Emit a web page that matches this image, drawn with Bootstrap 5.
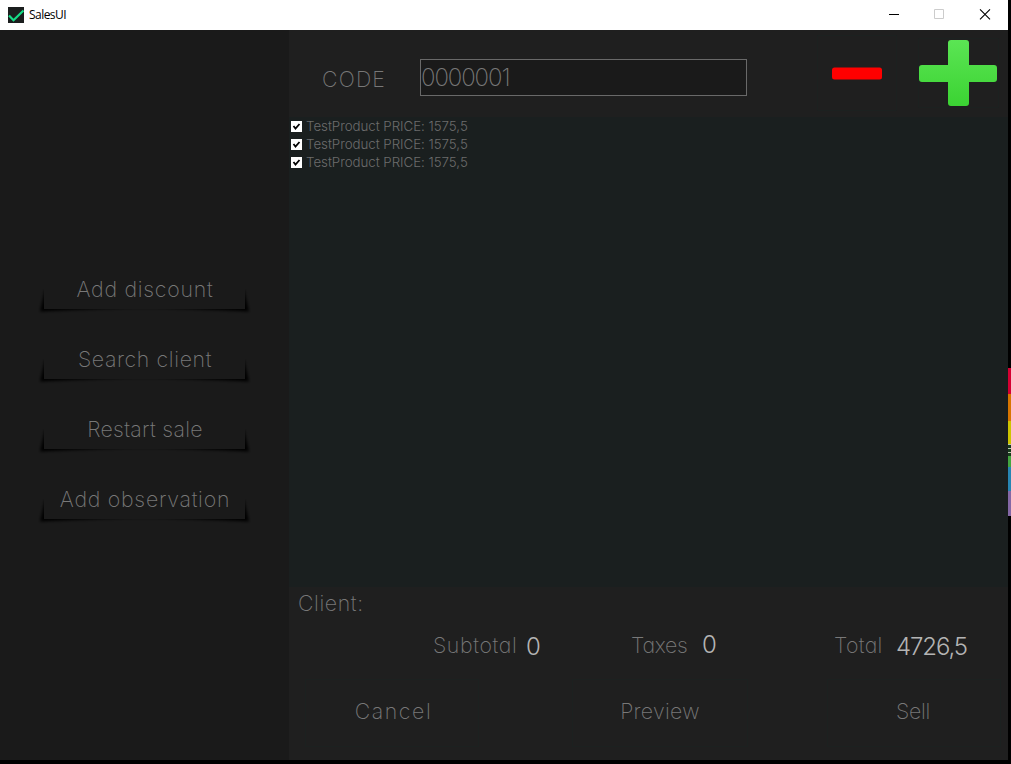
<!DOCTYPE html>
<html lang="en">
<head>
<meta charset="utf-8">
<meta name="viewport" content="width=device-width, initial-scale=1">
<title>SalesUI</title>
<link href="https://cdn.jsdelivr.net/npm/bootstrap@5.3.0/dist/css/bootstrap.min.css" rel="stylesheet">
<style>
body{background:#000;width:1011px;height:764px;overflow:hidden;font-family:Inter,"Open Sans",sans-serif;font-feature-settings:"cv11";font-weight:300;color:#787878}
.win{width:1008px;height:760px}
.titlebar{height:30px;font:12px/30px "Open Sans",sans-serif;color:#000;letter-spacing:-.55px}
.side{width:289px;background:#1a1a1a;padding-top:236px}
.workspace{background:#1f1f1f}
.txt{font-size:21.3px;line-height:30px;white-space:nowrap;font-weight:200}
.curl{width:220px;height:70px;margin-left:35px;position:relative;border:0;background:none;color:inherit;padding:0 0 24px}
.curl svg{position:absolute;left:0;top:0;z-index:0}
.curl span{position:relative;z-index:1;display:block}
.top{height:87px}
.code{width:327px;height:37px;background:#1a1a1a;border:1px solid #696969;border-radius:0;color:#787878;font-size:24px;line-height:35px;padding:0;font-weight:200;letter-spacing:-1.1px;margin:29px 0 0 0;outline:0}
.items{height:470px;background:#1a1f1f;padding:0 0 0 2px;font-size:13.3px;color:#6c6c6c;letter-spacing:-.03px}
.item{height:18px;line-height:18px}
.value{color:#b4b4b4;font-size:24px;font-weight:300}
.act{height:68px;border:1px solid #1c2120;background:none;color:inherit;padding:0 0 5px}
.strip{position:absolute;left:1008px;top:368px;width:3px;height:148px;background:linear-gradient(#d50032 0 26px,#d87500 26px 53px,#cdc400 53px 76px,#183c1c 76px 88px,#43a540 88px 99px,#2785b3 99px 123px,#8467a5 123px)}
.strip i{display:block;height:1px;background:#b8c8b0;margin-bottom:3px}
.ls3{letter-spacing:.3px}.ls6{letter-spacing:.62px}.ls7{letter-spacing:.75px}.ls12{letter-spacing:1.2px}.ls15{letter-spacing:1.6px}.lsn{letter-spacing:-.25px}.lsv{letter-spacing:-1.1px}
</style>
</head>
<body>
<svg width="0" height="0" class="position-absolute">
<defs>
<filter id="soft" x="-10%" y="-50%" width="120%" height="200%"><feGaussianBlur stdDeviation="1.7"/></filter>
<symbol id="curl" viewBox="0 0 220 70">
<path d="M10 24L5 45.500Q60 43 110 41.500Q160 43 214 45.500L209 24Z" fill="#000" filter="url(#soft)"/>
<path d="M9 17H210V43H9Z" fill="#1a1a1a"/><path d="M2 14H217V23H2Z" fill="#1a1a1a"/>
</symbol>
</defs>
</svg>
<div class="win d-flex flex-column">
  <header class="titlebar bg-white d-flex align-items-center flex-shrink-0">
    <svg width="16" height="16" class="ms-2"><path d="M0 0h16v16H0z" fill="#1b1e1e"/><path d="M1 8.500l4.500 4.700L15.500 3.500" fill="none" stroke="#16dd87" stroke-width="2.200"/></svg>
    <span style="margin-left:5px">SalesUI</span>
    <svg width="119" height="30" class="ms-auto"><path d="M0 14.500h10" stroke="#000"/><path d="M45.500 9.500h9v9h-9z" fill="none" stroke="#ccc"/><path d="M91 9.300l10 10m0-10l-10 10" stroke="#000" stroke-width="1.100"/></svg>
  </header>
  <div class="d-flex flex-grow-1">
    <nav class="side flex-shrink-0">
      <button class="curl d-block txt"><svg width="220" height="70"><use href="#curl"/></svg><span class="ls7">Add discount</span></button>
      <button class="curl d-block txt"><svg width="220" height="70"><use href="#curl"/></svg><span class="ls6">Search client</span></button>
      <button class="curl d-block txt"><svg width="220" height="70"><use href="#curl"/></svg><span class="ls3">Restart sale</span></button>
      <button class="curl d-block txt"><svg width="220" height="70"><use href="#curl"/></svg><span class="ls7">Add observation</span></button>
    </nav>
    <main class="workspace flex-grow-1">
      <div class="top d-flex">
        <label class="txt ls12" for="code" style="width:131px;padding:34px 0 0 33px">CODE</label>
        <input id="code" class="code" value="0000001">
        <svg width="260" height="87">
          <defs><linearGradient id="g" x2="0" y2="1"><stop stop-color="#5be554"/><stop offset="1" stop-color="#3bd333"/></linearGradient></defs>
          <path d="M70.500 5.500h79v75h-79zM171.500 8.500h80v69h-80z" fill="none" stroke="#1c2120"/>
          <rect x="85" y="37.500" width="50" height="12" rx="2.500" fill="#f00"/>
          <path d="M205 10h15q3 0 3 3v22h25q3 0 3 3v11q0 3-3 3h-25v21q0 3-3 3h-15q-3 0-3-3V52h-26q-3 0-3-3V38q0-3 3-3h26V13q0-3 3-3z" fill="url(#g)" transform="translate(-1 0)"/>
        </svg>
      </div>
      <div class="items">
        <div class="item d-flex align-items-center"><svg width="11" height="11"><path d="M0 0h11v11H0z" fill="#fff"/><path d="M2.500 5l2 2.500L8.500 3" fill="none" stroke="#000" stroke-width="1.800"/></svg><span class="ms-1">TestProduct PRICE: 1575,5</span></div>
        <div class="item d-flex align-items-center"><svg width="11" height="11"><path d="M0 0h11v11H0z" fill="#fff"/><path d="M2.500 5l2 2.500L8.500 3" fill="none" stroke="#000" stroke-width="1.800"/></svg><span class="ms-1">TestProduct PRICE: 1575,5</span></div>
        <div class="item d-flex align-items-center"><svg width="11" height="11"><path d="M0 0h11v11H0z" fill="#fff"/><path d="M2.500 5l2 2.500L8.500 3" fill="none" stroke="#000" stroke-width="1.800"/></svg><span class="ms-1">TestProduct PRICE: 1575,5</span></div>
      </div>
      <div class="txt ls6" style="padding:1px 0 0 9px;height:43px">Client:</div>
      <div class="d-flex txt" style="height:49px">
        <span class="ls6" style="width:93px;margin-left:144px">Subtotal</span><span class="value" style="width:105px;padding-top:2px">0</span>
        <span class="lsn" style="width:71px">Taxes</span><span class="value" style="width:132px">0</span>
        <span class="ls3" style="width:62px">Total</span><span class="value lsv" style="padding-top:2px">4726,5</span>
      </div>
      <div class="d-flex">
        <button class="act txt ls15" style="width:174px;margin-left:16px;padding-left:3px">Cancel</button>
        <button class="act txt ls3" style="width:176px;margin-left:93px">Preview</button>
        <button class="act txt lsn" style="width:174px;margin-left:79px;padding-right:2px">Sell</button>
      </div>
    </main>
  </div>
</div>
<div class="strip"><div style="height:76px"></div><i></i><i></i><i></i></div>
<script src="https://cdn.jsdelivr.net/npm/bootstrap@5.3.0/dist/js/bootstrap.bundle.min.js"></script>
</body>
</html>
